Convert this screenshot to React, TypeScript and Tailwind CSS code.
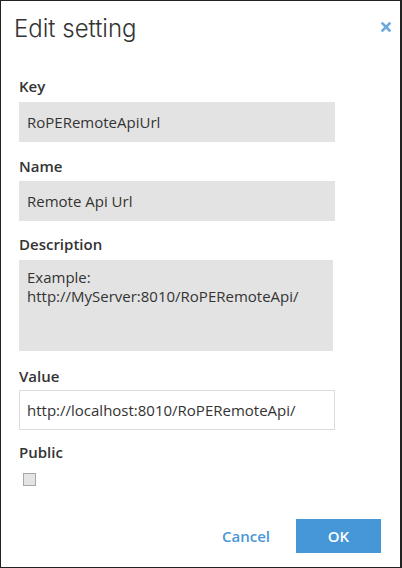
import React from "react";

const sans = { fontFamily: '"Open Sans", "Noto Sans", sans-serif' };

function Label({ children, className = "" }: { children: React.ReactNode; className?: string }) {
  return (
    <div className={`text-[15px] leading-[20px] font-semibold text-[#333] ${className}`}>{children}</div>
  );
}

export default function App() {
  return (
    <div
      className="w-[402px] h-[568px] bg-white border border-r-2 border-[#222] flex flex-col"
      style={sans}
    >
      <div className="flex items-center justify-between pl-[13px] pr-[9px] pt-[11px] h-[44px]">
        <div
          className="text-[24px] leading-[32px] font-light text-[#333]"
          style={{ fontFamily: '"Inter", "Lato", sans-serif' }}
        >
          Edit setting
        </div>
        <svg width="10" height="10" viewBox="0 0 10 10" className="mt-[-3px]">
          <path d="M1.5 1.5 L8.5 8.5 M8.5 1.5 L1.5 8.5" stroke="#6ea8dc" strokeWidth="2.6" strokeLinecap="square" />
        </svg>
      </div>

      <div className="flex flex-col pl-[18px]">
        <Label className="mt-[31px]">Key</Label>
        <div className="mt-[6px] w-[316px] h-[40px] bg-[#e3e3e3] flex items-center pl-[8px] text-[15px] text-[#333]">
          RoPERemoteApiUrl
        </div>

        <Label className="mt-[14px]">Name</Label>
        <div className="mt-[5px] w-[316px] h-[40px] bg-[#e3e3e3] flex items-center pl-[8px] text-[15px] text-[#333]">
          Remote Api Url
        </div>

        <Label className="mt-[13px]">Description</Label>
        <div className="mt-[6px] w-[314px] h-[91px] bg-[#e3e3e3] pl-[8px] pt-[8px] text-[15px] leading-[19px] text-[#333]">
          <div>Example:</div>
          <div>http://MyServer:8010/RoPERemoteApi/</div>
        </div>

        <Label className="mt-[15px]">Value</Label>
        <div className="mt-[4px] w-[316px] h-[40px] bg-white border border-[#dcdcdc] flex items-center pl-[7px] text-[15px] text-[#333]">
          http://localhost:8010/RoPERemoteApi/
        </div>

        <Label className="mt-[12px]">Public</Label>
        <div className="mt-[11px] ml-[4px] w-[13px] h-[13px] bg-[#e4e4e4] border border-[#a8a8a8]" />
      </div>

      <div className="flex items-center justify-end mt-[33px] pr-[19px] gap-[26px]">
        <div className="text-[15px] font-semibold text-[#4a96d6]">Cancel</div>
        <div className="w-[85px] h-[34px] bg-[#4597d8] flex items-center justify-center text-[15px] font-semibold text-white">
          OK
        </div>
      </div>
    </div>
  );
}
